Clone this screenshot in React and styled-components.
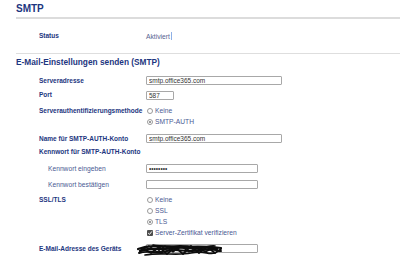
import React from 'react'
import styled, { createGlobalStyle } from 'styled-components'

const GlobalStyle = createGlobalStyle`
  body {
    margin: 0;
    background: #ffffff;
    font-family: "Liberation Sans", Arial, sans-serif;
  }
`

const Page = styled.div`
  padding-left: 16px;
  width: 384px;
  height: 263px;
  overflow: hidden;
`

const Title = styled.div`
  padding-top: 3px;
  padding-bottom: 2px;
  font-size: 10px;
  line-height: 12px;
  font-weight: 700;
  color: #1d3680;
  border-bottom: 2px solid #dcdcdc;
`

const StatusRow = styled.div`
  height: 34px;
  display: flex;
  align-items: center;
  padding-left: 23px;
  border-bottom: 1px solid #dedede;
`

const Heading = styled.div`
  padding-top: 3px;
  font-size: 8.3px;
  line-height: 10px;
  font-weight: 700;
  color: #1d3680;
`

const Row = styled.div`
  display: flex;
  margin-top: ${p => p.mt || 0}px;
  padding-left: 23px;
`

const Label = styled.div`
  flex: 0 0 ${p => (p.sub ? 98 : 107)}px;
  padding-left: ${p => (p.sub ? 9 : 0)}px;
  height: ${p => p.h}px;
  line-height: ${p => p.h}px;
  font-size: ${p => (p.sub ? 6.7 : 6.5)}px;
  font-weight: ${p => (p.sub ? 400 : 700)};
  color: ${p => (p.sub ? '#4b5a93' : '#1d3680')};
  white-space: nowrap;
`

const Values = styled.div`
  display: flex;
  flex-direction: column;
`

const Line = styled.div`
  position: relative;
  height: ${p => p.h}px;
  display: flex;
  align-items: center;
  gap: 2px;
  font-size: 6.7px;
  color: #4b5a93;
  white-space: nowrap;
`

const Text = styled.span`
  font-size: 6.7px;
  color: #56628f;
`

const Caret = styled.span`
  width: 1px;
  height: 8px;
  margin-left: -1px;
  background: #8fb0e6;
`

const Field = styled.input`
  box-sizing: border-box;
  width: ${p => p.w}px;
  height: 9px;
  margin: 0;
  padding: 0 2px;
  border: 1px solid #a8a8a8;
  border-radius: 1px;
  font-family: "Liberation Sans", Arial, sans-serif;
  font-size: 6.5px;
  color: #333333;
  background: #ffffff;
  outline: none;
`

const Radio = styled.span`
  box-sizing: border-box;
  width: 6px;
  height: 6px;
  margin-left: 1px;
  border-radius: 50%;
  border: 1px solid #9a9a9a;
  background: #ffffff;
  display: inline-flex;
  align-items: center;
  justify-content: center;

  &::after {
    content: '';
    width: 2px;
    height: 2px;
    border-radius: 50%;
    background: ${p => (p.checked ? '#7a7a7a' : 'transparent')};
  }
`

const Check = styled.span`
  box-sizing: border-box;
  width: 6px;
  height: 6px;
  margin-left: 1px;
  background: #4d4d4d;
  border-radius: 1px;
  display: inline-flex;
`

const Scribble = styled.svg`
  position: absolute;
  left: -9px;
  top: 2px;
`

const RadioLine = ({ checked, children }) => (
  <Line h={11}>
    <Radio checked={checked} />
    {children}
  </Line>
)

export default function App() {
  return (
    <Page>
      <GlobalStyle />
      <Title>SMTP</Title>
      <StatusRow>
        <Label h={10}>Status</Label>
        <Line h={10}>
          <Text>Aktiviert</Text>
          <Caret />
        </Line>
      </StatusRow>
      <Heading>E-Mail-Einstellungen senden (SMTP)</Heading>

      <Row mt={6}>
        <Label h={15}>Serveradresse</Label>
        <Values>
          <Line h={15}><Field w={136} defaultValue="smtp.office365.com" /></Line>
        </Values>
      </Row>
      <Row>
        <Label h={14}>Port</Label>
        <Values>
          <Line h={14}><Field w={28} defaultValue="587" /></Line>
        </Values>
      </Row>
      <Row mt={3}>
        <Label h={11}>Serverauthentifizierungsmethode</Label>
        <Values>
          <RadioLine>Keine</RadioLine>
          <RadioLine checked>SMTP-AUTH</RadioLine>
        </Values>
      </Row>
      <Row mt={3.5}>
        <Label h={15}>Name für SMTP-AUTH-Konto</Label>
        <Values>
          <Line h={15}><Field w={136} defaultValue="smtp.office365.com" /></Line>
        </Values>
      </Row>
      <Row>
        <Label h={12}>Kennwort für SMTP-AUTH-Konto</Label>
      </Row>
      <Row mt={3.5}>
        <Label h={15} sub>Kennwort eingeben</Label>
        <Values>
          <Line h={15}><Field w={112} type="password" defaultValue="12345678" /></Line>
        </Values>
      </Row>
      <Row mt={1}>
        <Label h={15} sub>Kennwort bestätigen</Label>
        <Values>
          <Line h={15}><Field w={112} defaultValue="" /></Line>
        </Values>
      </Row>
      <Row mt={2}>
        <Label h={11}>SSL/TLS</Label>
        <Values>
          <RadioLine>Keine</RadioLine>
          <RadioLine>SSL</RadioLine>
          <RadioLine checked>TLS</RadioLine>
          <Line h={11}>
            <Check>
              <svg width="6" height="6" viewBox="0 0 6 6">
                <path d="M1.2 3.1 L2.5 4.4 L4.9 1.4" stroke="#fff" strokeWidth="1" fill="none" />
              </svg>
            </Check>
            Server-Zertifikat verifizieren
          </Line>
        </Values>
      </Row>
      <Row mt={2.5}>
        <Label h={15}>E-Mail-Adresse des Geräts</Label>
        <Values>
          <Line h={15}>
            <Field w={112} defaultValue="" />
            <Scribble width="86" height="14" viewBox="0 0 86 14">
              <g stroke="#0d0d0d" fill="none" strokeLinecap="round" strokeLinejoin="round">
                <path d="M1 6 C 12 2, 22 3, 34 4 S 60 2, 84 5" strokeWidth="2.2" />
                <path d="M3 8 C 14 4, 26 7, 38 5 S 62 8, 80 6" strokeWidth="2.4" />
                <path d="M2 10 C 10 7, 20 11, 30 8 S 50 10, 66 7 S 76 9, 84 8" strokeWidth="2" />
                <path d="M6 5 L14 10 L22 4 L30 11 L38 4 L46 11 L54 3 L62 10 L70 4 L78 10 L84 6" strokeWidth="1.8" />
                <path d="M8 12 C 24 9, 40 13, 54 10 S 70 12, 78 10" strokeWidth="1.6" />
                <path d="M16 2 C 30 5, 44 1, 56 4 S 70 2, 78 3" strokeWidth="1.6" />
                <path d="M4 7 L12 3 L20 9 L28 3 L36 9 L44 3 L52 9 L60 4 L68 9 L76 5" strokeWidth="1.4" />
              </g>
            </Scribble>
          </Line>
        </Values>
      </Row>
    </Page>
  )
}
